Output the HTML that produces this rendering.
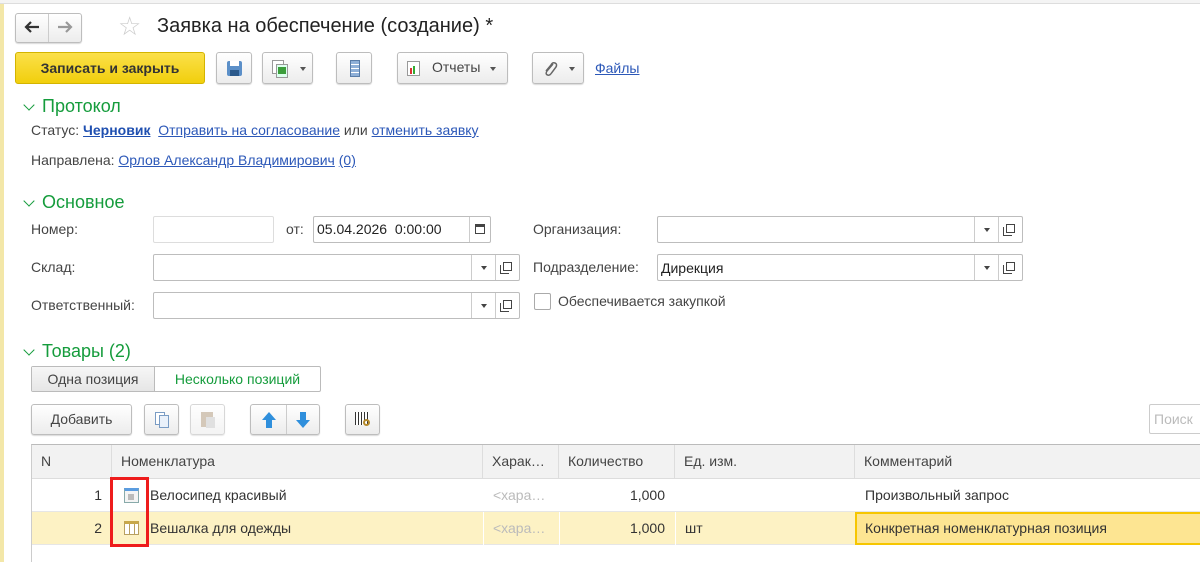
<!DOCTYPE html>
<html><head><meta charset="utf-8"><style>
*{box-sizing:border-box}
body{margin:0;width:1200px;height:562px;overflow:hidden;background:#fff;font-family:"Liberation Sans",Arial,sans-serif;font-size:14px;color:#333;position:relative}
.a{position:absolute}
.btn{position:absolute;border:1px solid #bdbdbd;border-radius:3px;background:linear-gradient(#fff,#ececec);box-shadow:0 1px 1px rgba(0,0,0,.15)}
.lnk{color:#2c58b8;text-decoration:underline}
.hdr{position:absolute;color:#159c3c;font-size:18px}
.hdr:before{content:"";position:absolute;left:-17px;top:5px;width:7px;height:7px;border-right:1.5px solid #159c3c;border-bottom:1.5px solid #159c3c;transform:rotate(45deg)}
.inp{position:absolute;border:1px solid #bdbdbd;border-radius:2px;background:#fff;height:27px}
.dd{position:absolute;top:0;bottom:0;width:24px;border-left:1px solid #ccc}
.dd.t:after{content:"";position:absolute;left:9px;top:11px;border:3px solid transparent;border-top:4px solid #444}
.dd.o:after{content:"";position:absolute;left:7px;top:7px;width:7px;height:7px;border:1px solid #444;box-shadow:-2px 2px 0 0 #fff,-3px 3px 0 0 #444}
.lbl{position:absolute;color:#444}
.th{position:absolute;top:0;height:33px;line-height:33px;padding-left:9px;border-right:1px solid #ddd;color:#444}
.cell{position:absolute;height:32px;line-height:32px}
</style></head><body>
<div class="a" style="left:0;top:0;width:4px;height:562px;background:#f3e7a8"></div>
<div class="a" style="left:0;top:0;width:1200px;height:4px;border-bottom:1px solid #ddd;background:#f4f4f4"></div>
<div class="btn" style="left:15px;top:13px;width:67px;height:30px"></div>
<div class="a" style="left:48px;top:14px;width:1px;height:28px;background:#ccc"></div>
<svg class="a" style="left:24px;top:20px" width="16" height="14"><path d="M2 7H15M7 2L2 7L7 12" stroke="#333" stroke-width="2.2" fill="none"/></svg>
<svg class="a" style="left:57px;top:20px" width="16" height="14"><path d="M1 7H14M9 2L14 7L9 12" stroke="#999" stroke-width="2.2" fill="none"/></svg>
<div class="a" style="left:118px;top:11px;font-size:26px;color:#ccc">&#9734;</div>
<div class="a" style="left:157px;top:15px;font-size:20px;color:#222">Заявка на обеспечение (создание) *</div>

<div class="a" style="left:15px;top:52px;width:190px;height:32px;border:1px solid #d3b400;border-radius:3px;background:linear-gradient(#fbe04a,#f1cf0c);font-weight:bold;color:#333;text-align:center;line-height:30px">Записать и закрыть</div>
<div class="btn" style="left:216px;top:52px;width:36px;height:32px"><div class="a" style="left:10px;top:8px;width:15px;height:15px;background:#5b8fc8;border-radius:2px"><div class="a" style="left:3px;top:0;width:9px;height:5px;background:#fff"></div><div class="a" style="left:3px;top:9px;width:9px;height:6px;background:#2c5a8c"></div></div></div>
<div class="btn" style="left:262px;top:52px;width:51px;height:32px"><div class="a" style="left:9px;top:7px;width:12px;height:14px;border:1px solid #999;background:#fff"></div><div class="a" style="left:13px;top:11px;width:12px;height:14px;border:1px solid #999;background:#dfe"></div><div class="a" style="left:15px;top:14px;width:8px;height:7px;background:#3b9e3b"></div><div class="a" style="left:37px;top:14px;border:3px solid transparent;border-top:4px solid #555"></div></div>
<div class="btn" style="left:336px;top:52px;width:36px;height:32px"><div class="a" style="left:13px;top:7px;width:10px;height:17px;border:1px solid #5a7da8;background:repeating-linear-gradient(#8fb0d8 0 3px,#fff 3px 4px)"></div></div>
<div class="btn" style="left:397px;top:52px;width:111px;height:32px"><div class="a" style="left:9px;top:8px;width:13px;height:15px;border:1px solid #999;background:#fff"></div><div class="a" style="left:12px;top:15px;width:2px;height:6px;background:#d33"></div><div class="a" style="left:15px;top:13px;width:2px;height:8px;background:#3a3"></div><div class="a" style="left:34px;top:6px;color:#444">Отчеты</div><div class="a" style="left:92px;top:14px;border:3px solid transparent;border-top:4px solid #555"></div></div>
<div class="btn" style="left:532px;top:52px;width:52px;height:32px"><svg class="a" style="left:9px;top:7px" width="16" height="17"><path d="M11 4L5 11Q3 14 5.5 15Q7.5 16 9.5 13L14 7Q15.5 4 13 3Q10.5 2 9 5L4 11" stroke="#666" stroke-width="1.5" fill="none"/></svg><div class="a" style="left:36px;top:14px;border:3px solid transparent;border-top:4px solid #555"></div></div>
<div class="a lnk" style="left:595px;top:60px">Файлы</div>

<div class="hdr" style="left:42px;top:96px">Протокол</div>
<div class="a" style="left:31px;top:122px;color:#444">Статус: <b class="lnk" style="color:#1f4fb0">Черновик</b>&nbsp; <span class="lnk">Отправить на согласование</span> или <span class="lnk">отменить заявку</span></div>
<div class="a" style="left:31px;top:152px;color:#444">Направлена: <span class="lnk">Орлов Александр Владимирович</span> <span class="lnk">(0)</span></div>

<div class="hdr" style="left:42px;top:192px">Основное</div>
<div class="lbl" style="left:31px;top:221px">Номер:</div>
<div class="inp" style="left:153px;top:216px;width:121px;border-color:#ddd"></div>
<div class="lbl" style="left:286px;top:221px">от:</div>
<div class="inp" style="left:313px;top:216px;width:178px"><span class="a" style="left:3px;top:4px;color:#222">05.04.2026&nbsp; 0:00:00</span><div class="dd" style="right:0;width:21px"><div class="a" style="left:5px;top:7px;width:10px;height:10px;border:1px solid #444;border-top-width:3px"></div></div></div>
<div class="lbl" style="left:533px;top:221px">Организация:</div>
<div class="inp" style="left:657px;top:216px;width:366px"><div class="dd t" style="right:24px"></div><div class="dd o" style="right:0"></div></div>

<div class="lbl" style="left:31px;top:259px">Склад:</div>
<div class="inp" style="left:153px;top:254px;width:367px"><div class="dd t" style="right:24px"></div><div class="dd o" style="right:0"></div></div>
<div class="lbl" style="left:533px;top:259px">Подразделение:</div>
<div class="inp" style="left:657px;top:254px;width:366px"><span class="a" style="left:3px;top:5px;color:#222">Дирекция</span><div class="dd t" style="right:24px"></div><div class="dd o" style="right:0"></div></div>

<div class="lbl" style="left:31px;top:297px">Ответственный:</div>
<div class="inp" style="left:153px;top:292px;width:367px"><div class="dd t" style="right:24px"></div><div class="dd o" style="right:0"></div></div>
<div class="a" style="left:534px;top:293px;width:17px;height:17px;border:1px solid #aaa;border-radius:2px"></div>
<div class="lbl" style="left:558px;top:293px">Обеспечивается закупкой</div>

<div class="hdr" style="left:42px;top:341px">Товары (2)</div>
<div class="a" style="left:31px;top:366px;width:290px;height:26px;border:1px solid #bbb;border-radius:2px;background:#fff"></div>
<div class="a" style="left:32px;top:367px;width:123px;height:24px;background:linear-gradient(#f6f6f6,#e6e6e6);border-right:1px solid #bbb;line-height:24px;text-align:center;color:#444">Одна позиция</div>
<div class="a" style="left:155px;top:367px;width:165px;line-height:24px;text-align:center;color:#159c3c">Несколько позиций</div>

<div class="btn" style="left:31px;top:404px;width:101px;height:31px;line-height:29px;text-align:center;color:#444">Добавить</div>
<div class="btn" style="left:144px;top:404px;width:35px;height:31px"><div class="a" style="left:10px;top:7px;width:10px;height:13px;border:1px solid #7a9cc4;background:#fff"></div><div class="a" style="left:14px;top:10px;width:10px;height:13px;border:1px solid #7a9cc4;background:#eaf1fa"></div></div>
<div class="btn" style="left:190px;top:404px;width:35px;height:31px;opacity:.6"><div class="a" style="left:10px;top:7px;width:12px;height:15px;background:#b9a58c"></div><div class="a" style="left:15px;top:12px;width:9px;height:11px;background:#ccc"></div></div>
<div class="btn" style="left:250px;top:404px;width:70px;height:31px"><div class="a" style="left:35px;top:0;width:1px;height:29px;background:#ccc"></div>
<svg class="a" style="left:10px;top:6px" width="16" height="18"><path d="M8 1L15 9H11V17H5V9H1Z" fill="#2f8fdc"/></svg>
<svg class="a" style="left:44px;top:6px" width="16" height="18"><path d="M8 17L15 9H11V1H5V9H1Z" fill="#2f8fdc"/></svg></div>
<div class="btn" style="left:345px;top:404px;width:35px;height:31px"><div class="a" style="left:9px;top:7px;width:14px;height:13px;background:repeating-linear-gradient(90deg,#333 0 1px,#fff 1px 3px)"></div><div class="a" style="left:17px;top:14px;width:7px;height:7px;border:2px solid #b58a2c;border-radius:50%"></div></div>
<div class="a" style="left:1149px;top:404px;width:60px;height:30px;border:1px solid #ccc;border-radius:2px;color:#bbb;padding:6px 0 0 4px">Поиск</div>

<div class="a" style="left:31px;top:444px;width:1180px;height:118px;border-left:1px solid #ccc;border-top:1px solid #bbb">
<div class="a" style="left:0;top:0;width:1180px;height:34px;background:#f2f2f2;border-bottom:1px solid #ddd">
<div class="th" style="left:0;width:80px">N</div>
<div class="th" style="left:80px;width:371px">Номенклатура</div>
<div class="th" style="left:451px;width:76px">Харак…</div>
<div class="th" style="left:527px;width:116px">Количество</div>
<div class="th" style="left:643px;width:180px">Ед. изм.</div>
<div class="th" style="left:823px;width:360px">Комментарий</div>
</div>
<div class="a" style="left:0;top:34px;width:1180px;height:33px;border-bottom:1px solid #e6e6e6">
<div class="cell" style="left:0;width:70px;text-align:right;color:#333">1</div>
<div class="a" style="left:92px;top:9px;width:15px;height:15px;border:1px solid #8aa;border-top:3px solid #5a9ce0;background:#f4f4f4"><div class="a" style="left:3px;top:3px;width:6px;height:6px;background:#bbb"></div></div>
<div class="cell" style="left:118px;color:#333">Велосипед красивый</div>
<div class="cell" style="left:461px;color:#bbb">&lt;хара…</div>
<div class="cell" style="left:527px;width:106px;text-align:right;color:#333">1,000</div>
<div class="cell" style="left:833px;color:#333">Произвольный запрос</div>
</div>
<div class="a" style="left:0;top:67px;width:1180px;height:33px;background:#fdf2c4;border-bottom:1px solid #e6e6e6">
<div class="a" style="left:451px;top:0;width:1px;height:33px;background:#fff"></div><div class="a" style="left:527px;top:0;width:1px;height:33px;background:#fff"></div><div class="a" style="left:643px;top:0;width:1px;height:33px;background:#fff"></div>
<div class="cell" style="left:0;width:70px;text-align:right;color:#333">2</div>
<div class="a" style="left:92px;top:9px;width:15px;height:14px;border:1px solid #b8a060;border-top:3px solid #c8a84a;background:repeating-linear-gradient(90deg,#fff 0 4px,#b8a060 4px 5px)"></div>
<div class="cell" style="left:118px;color:#333">Вешалка для одежды</div>
<div class="cell" style="left:461px;color:#bbb">&lt;хара…</div>
<div class="cell" style="left:527px;width:106px;text-align:right;color:#333">1,000</div>
<div class="cell" style="left:653px;color:#333">шт</div>
<div class="a" style="left:823px;top:0;width:360px;height:33px;background:#fde592;border:2px solid #f6c600;padding-left:8px;line-height:29px;color:#333">Конкретная номенклатурная позиция</div>
</div>
</div>
<div class="a" style="left:110px;top:477px;width:39px;height:70px;border:3px solid #ee1c1c"></div>
</body></html>
